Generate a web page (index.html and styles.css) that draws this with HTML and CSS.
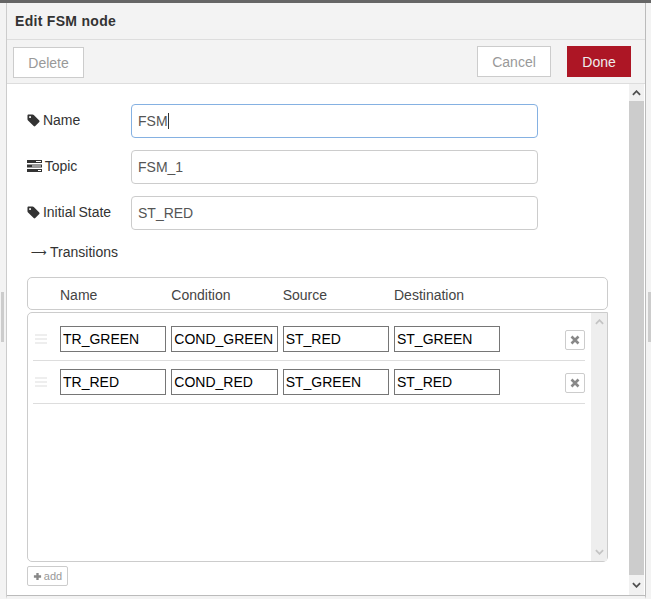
FILE: index.html
```html
<!DOCTYPE html>
<html lang="en">

<head>
    <meta charset="UTF-8">
    <title>Edit FSM node</title>
    <link rel="stylesheet" href="styles.css">
</head>

<body>
    <div class="topline"></div>
    <div class="page">
        <div class="gutter gutter-left"><div class="handle"></div></div>

        <div class="tray">
            <header class="tray-title">Edit FSM node</header>

            <div class="tray-buttons">
                <button class="btn btn-delete">Delete</button>
                <div class="tray-buttons-right">
                    <button class="btn btn-cancel">Cancel</button>
                    <button class="btn btn-done">Done</button>
                </div>
            </div>

            <div class="tray-body">
                <main class="form">
                    <div class="form-row">
                        <label class="form-label">
                            <svg class="icon-tag" viewBox="0 0 14 14"><path fill-rule="evenodd" d="M0.5 1.6C0.5 1 1 .5 1.6 .5H6c.5 0 1 .3 1.3 .6l5.9 5.9c.5 .5 .5 1.2 0 1.7L8.9 13c-.5 .5-1.2 .5-1.7 0L1.1 7C.8 6.700 .5 6.200 .5 5.700ZM3.300 2.200a1.100 1.100 0 1 0 .01 0Z"/></svg>
                            Name
                        </label>
                        <!-- focused field, caret is drawn so it shows in a still picture -->
                        <div class="text-input text-input-focus">FSM<span class="caret"></span></div>
                    </div>
                    <div class="form-row">
                        <label class="form-label">
                            <svg class="icon-tasks" viewBox="0 0 15 12"><path fill-rule="evenodd" d="M0 0H15V3H0ZM9 1V2H14V1ZM0 4.500H15V7.500H0ZM5 5.500V6.500H14V5.500ZM0 9H15V12H0ZM11 10V11H14V10Z"/></svg>
                            Topic
                        </label>
                        <input class="text-input" type="text" value="FSM_1">
                    </div>
                    <div class="form-row">
                        <label class="form-label">
                            <svg class="icon-tag" viewBox="0 0 14 14"><path fill-rule="evenodd" d="M0.5 1.6C0.5 1 1 .5 1.6 .5H6c.5 0 1 .3 1.3 .6l5.9 5.9c.5 .5 .5 1.2 0 1.7L8.9 13c-.5 .5-1.2 .5-1.7 0L1.1 7C.8 6.700 .5 6.200 .5 5.700ZM3.300 2.200a1.100 1.100 0 1 0 .01 0Z"/></svg>
                            Initial State
                        </label>
                        <input class="text-input" type="text" value="ST_RED">
                    </div>

                    <div class="section-label"><span class="arrow">&#x27F6;</span>Transitions</div>

                    <div class="table-head">
                        <span class="col">Name</span>
                        <span class="col">Condition</span>
                        <span class="col">Source</span>
                        <span class="col">Destination</span>
                    </div>

                    <div class="list-box">
                        <div class="list-rows">
                            <div class="list-row">
                                <div class="drag"><i></i><i></i><i></i></div>
                                <input class="cell" type="text" value="TR_GREEN">
                                <input class="cell" type="text" value="COND_GREEN">
                                <input class="cell" type="text" value="ST_RED">
                                <input class="cell" type="text" value="ST_GREEN">
                                <button class="row-remove"><svg viewBox="0 0 10 10"><path d="M1.500 1.500L8.500 8.500M8.500 1.500L1.500 8.500"/></svg></button>
                            </div>
                            <div class="list-row">
                                <div class="drag"><i></i><i></i><i></i></div>
                                <input class="cell" type="text" value="TR_RED">
                                <input class="cell" type="text" value="COND_RED">
                                <input class="cell" type="text" value="ST_GREEN">
                                <input class="cell" type="text" value="ST_RED">
                                <button class="row-remove"><svg viewBox="0 0 10 10"><path d="M1.500 1.500L8.500 8.500M8.500 1.500L1.500 8.500"/></svg></button>
                            </div>
                        </div>
                        <div class="scrollbar scrollbar-small">
                            <svg viewBox="0 0 10 6"><path d="M1 5L5 1L9 5"/></svg>
                            <svg viewBox="0 0 10 6"><path d="M1 1L5 5L9 1"/></svg>
                        </div>
                    </div>

                    <button class="btn-add"><svg viewBox="0 0 10 10"><path d="M5 1V9M1 5H9"/></svg> add</button>
                </main>

                <div class="scrollbar scrollbar-main">
                    <div class="scroll-end"><svg viewBox="0 0 10 6"><path d="M1 5L5 1L9 5"/></svg></div>
                    <div class="scroll-thumb"></div>
                    <div class="scroll-end"><svg viewBox="0 0 10 6"><path d="M1 1L5 5L9 1"/></svg></div>
                </div>
            </div>
        </div>

        <div class="gutter gutter-right"><div class="handle"></div></div>
    </div>
</body>

</html>
```

FILE: styles.css
```css
* {
    box-sizing: border-box;
}

html, body {
    height: 100%;
}

body {
    margin: 0;
    background-color: #f3f3f3;
    color: #333;
    font-family: "Liberation Sans", Arial, sans-serif;
    font-size: 14px;
    overflow: hidden;
    display: flex;
    flex-direction: column;
}

.topline {
    height: 3px;
    background-color: #666;
    flex: none;
}

.page {
    flex: 1;
    display: flex;
    min-height: 0;
}

.gutter {
    flex: none;
    padding-top: 289px;
}

.gutter-left {
    width: 6px;
    padding-left: 1px;
}

.gutter-right {
    width: 5px;
    padding-left: 2px;
}

.handle {
    width: 3px;
    height: 50px;
    background-color: #ccc;
}

.tray {
    flex: 1;
    min-width: 0;
    display: flex;
    flex-direction: column;
    border-left: 1px solid #ccc;
    border-right: 1px solid #bbb;
    border-bottom: 3px solid #f3f3f3;
}

.tray-title {
    flex: none;
    height: 37px;
    padding: 10px 0 0 8px;
    font-weight: bold;
    line-height: 16px;
    letter-spacing: .3px;
    border-bottom: 1px solid #ddd;
}

.tray-buttons {
    flex: none;
    height: 44px;
    display: flex;
    justify-content: space-between;
    padding: 6px 14px 0 6px;
    border-bottom: 1px solid #ddd;
}

.tray-buttons-right {
    display: flex;
    gap: 16px;
}

.btn {
    height: 31px;
    border: 1px solid #ccc;
    background-color: #fff;
    color: #999;
    font: 14px "Liberation Sans", Arial, sans-serif;
    padding: 0;
}

.btn-delete {
    width: 71px;
    margin-top: 1px;
}

.btn-cancel {
    width: 74px;
}

.btn-done {
    width: 64px;
    border-color: #ad1625;
    background-color: #ad1625;
    color: #eee;
}

.tray-body {
    flex: 1;
    min-height: 0;
    display: flex;
    background-color: #fff;
    border-bottom: 1px solid #bbb;
}

.form {
    flex: 1;
    min-width: 0;
    padding: 20px 21px 0 20px;
}

.form-row {
    display: flex;
    height: 34px;
    margin-bottom: 12px;
}

.form-label {
    width: 104px;
    flex: none;
    padding-top: 8px;
    line-height: 16px;
    word-spacing: -1px;
    white-space: nowrap;
}

.icon-tag {
    width: 13px;
    height: 13px;
    fill: #333;
    vertical-align: -2px;
}

.icon-tasks {
    width: 15px;
    height: 12px;
    fill: #333;
    vertical-align: -1px;
}

.text-input {
    width: 407px;
    height: 34px;
    border: 1px solid #ccc;
    border-radius: 4px;
    padding: 0 6px;
    color: #555;
    background-color: #fff;
    font: 14px "Liberation Sans", Arial, sans-serif;
    outline: none;
}

.text-input-focus {
    border-color: #85b1e2;
    line-height: 32px;
}

.caret {
    display: inline-block;
    width: 1px;
    height: 16px;
    background-color: #333;
    vertical-align: -3px;
}

.section-label {
    height: 20px;
    margin-top: 2px;
    margin-bottom: 15px;
    padding-left: 4px;
    line-height: 16px;
    display: flex;
    align-items: center;
}

.arrow {
    font-family: "DejaVu Sans", sans-serif;
    font-size: 11px;
    width: 19px;
    padding-top: 2px;
}

.table-head {
    height: 33px;
    width: 581px;
    display: flex;
    align-items: center;
    padding: 2px 0 0 32px;
    border: 1px solid #ccc;
    border-radius: 5px;
}

.col {
    width: 111.330px;
    color: #444;
}

.list-box {
    width: 581px;
    height: 250px;
    margin-top: 2px;
    display: flex;
    border: 1px solid #ccc;
    border-radius: 5px 0 5px 5px;
}

.list-rows {
    flex: 1;
    min-width: 0;
    padding: 5px 6px 0 5px;
}

.list-row {
    height: 43px;
    display: flex;
    align-items: center;
    gap: 5px;
    border-bottom: 1px solid #ddd;
    padding-bottom: 1px;
}

.drag {
    width: 22px;
    flex: none;
    padding-left: 2px;
    display: flex;
    flex-direction: column;
    gap: 2px;
}

.drag i {
    display: block;
    width: 12px;
    height: 2px;
    background-color: #eee;
}

.cell {
    width: 106.330px;
    height: 26px;
    border: 1px solid #767676;
    padding: 0 2px;
    color: #000;
    background-color: #fff;
    font: 14px "Liberation Sans", Arial, sans-serif;
    border-radius: 0;
    outline: none;
}

.row-remove {
    width: 20px;
    height: 20px;
    margin: 2px 0 0 auto;
    padding: 4px;
    border: 1px solid #ccc;
    border-radius: 2px;
    background-color: #fff;
    display: flex;
}

.row-remove svg {
    width: 10px;
    height: 10px;
}

.row-remove path {
    stroke: #888;
    stroke-width: 2.600;
    fill: none;
}

.scrollbar-small {
    width: 16px;
    flex: none;
    background-color: #eee;
    display: flex;
    flex-direction: column;
    justify-content: space-between;
    align-items: center;
    padding: 6px 0;
}

.scrollbar-small svg {
    width: 9px;
    height: 6px;
}

.scrollbar-small path {
    stroke: #c4c4c4;
    stroke-width: 2;
    fill: none;
}

.btn-add {
    height: 20px;
    width: 41px;
    margin-top: 4px;
    padding: 0;
    border: 1px solid #ccc;
    border-radius: 2px;
    background-color: #fff;
    color: #999;
    font: 11px "Liberation Sans", Arial, sans-serif;
    display: flex;
    align-items: center;
    justify-content: center;
    gap: 2px;
}

.btn-add svg {
    width: 9px;
    height: 9px;
}

.btn-add path {
    stroke: #888;
    stroke-width: 2.600;
    fill: none;
}

.scrollbar-main {
    width: 15px;
    flex: none;
    margin-right: 1px;
    display: flex;
    flex-direction: column;
    background-color: #f1f1f1;
}

.scroll-end {
    height: 17px;
    flex: none;
    display: flex;
    align-items: center;
    justify-content: center;
}

.scrollbar-main .scroll-end:last-child {
    height: 20px;
}

.scroll-end svg {
    width: 9px;
    height: 6px;
}

.scroll-end path {
    stroke: #505050;
    stroke-width: 2;
    fill: none;
}

.scroll-thumb {
    flex: 1;
    background-color: #ccc;
}
```
